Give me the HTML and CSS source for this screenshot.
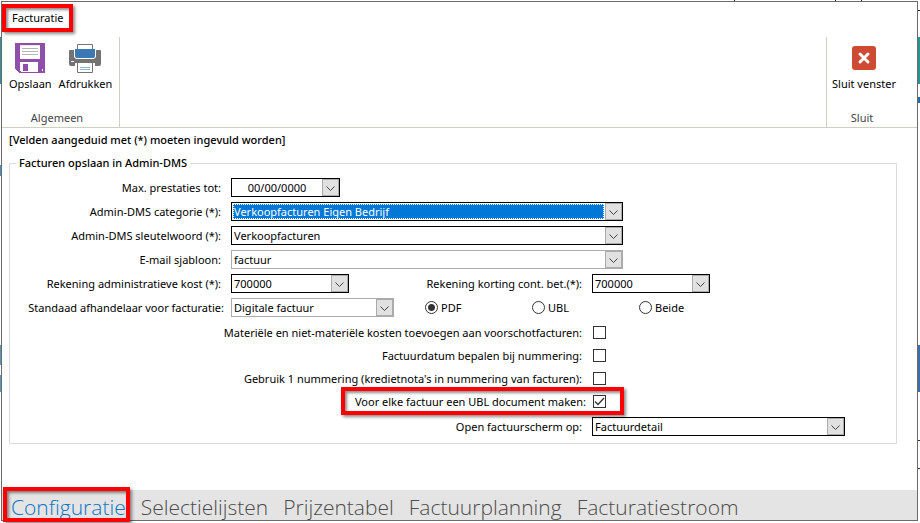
FILE: index.html
```html
<!DOCTYPE html>
<html lang="nl">
<head>
<meta charset="utf-8">
<title>Facturatie</title>
<link rel="stylesheet" href="styles.css">
</head>
<body>
<div class="window">
  <header class="titlebar"><h1 class="title marked">Facturatie</h1></header>

  <div class="ribbon">
    <section class="group">
      <div class="actions">
        <button type="button" class="action">
          <svg width="32" height="32" viewBox="0 0 32 32" aria-hidden="true" shape-rendering="crispEdges">
            <path fill="#8e4fab" d="M1 1H31V31H5L1 27Z"/>
            <path fill="#fff" d="M6 3H26V17H6Z"/>
            <path fill="#e8e8e8" d="M6 3H26V4H6Z"/>
            <path fill="#b4b4b4" d="M8 6H24V7H8ZM8 9H24V10H8ZM8 12H24V13H8Z"/>
            <path fill="#fff" d="M6 20H24V30H7L6 29Z"/>
            <path fill="#8e4fab" d="M9 22H14V29H9Z"/>
            <path fill="#fff" d="M28 27H29V29H28Z"/>
          </svg>
          <span>Opslaan</span>
        </button>
        <button type="button" class="action">
          <svg width="32" height="32" viewBox="0 0 32 32" aria-hidden="true">
            <path fill="#737373" d="M0 9Q0 8 1 8H5V15L7 17H25L27 15V8H31Q32 8 32 9V22Q32 24 30 24H26V21H6V24H2Q0 24 0 22Z"/>
            <path fill="#fff" stroke="#737373" d="M8.500 2.500H23.500V8H8.500Z"/>
            <path fill="#3c78b5" d="M6 7H26V14Q26 16 24 16H8Q6 16 6 14Z"/>
            <path fill="#fff" d="M2 19H5V20H2ZM8 21H24V31H8Z"/>
            <path fill="none" stroke="#737373" d="M8.500 21V30.500H23.500V21"/>
            <path fill="#8eb3cf" d="M11 25H21V26H11ZM11 27H21V28H11Z"/>
          </svg>
          <span>Afdrukken</span>
        </button>
      </div>
      <h2 class="caption">Algemeen</h2>
    </section>
    <section class="group group-close">
      <div class="actions">
        <button type="button" class="action">
          <svg width="32" height="32" viewBox="0 0 32 32" aria-hidden="true">
            <rect x="4" y="4" width="24" height="24" rx="3" fill="#cd4b33"/>
            <path stroke="#fff" stroke-width="3" stroke-linecap="round" d="M12 12L20 20M20 12L12 20"/>
          </svg>
          <span>Sluit venster</span>
        </button>
      </div>
      <h2 class="caption">Sluit</h2>
    </section>
  </div>

  <main class="content">
    <p class="notice">[Velden aangeduid met (*) moeten ingevuld worden]</p>
    <form>
      <fieldset class="panel">
        <legend>Facturen opslaan in Admin-DMS</legend>
        <div class="rows">
          <div class="row">
            <label for="date">Max. prestaties tot:</label>
            <span class="combo required w-date"><input id="date" type="text" value="00/00/0000"><button type="button" class="drop" aria-label="Kalender"><svg width="9" height="6" viewBox="0 0 9 6"><path d="M.5 .5L4.500 4.500L8.500 .5"/></svg></button></span>
          </div>
          <div class="row">
            <label for="category">Admin-DMS categorie (*):</label>
            <span class="combo required active w-full"><select id="category"><option>Verkoopfacturen Eigen Bedrijf</option></select><span class="drop"><svg width="9" height="6" viewBox="0 0 9 6"><path d="M.5 .5L4.500 4.500L8.500 .5"/></svg></span></span>
          </div>
          <div class="row">
            <label for="keyword">Admin-DMS sleutelwoord (*):</label>
            <span class="combo required w-full"><select id="keyword"><option>Verkoopfacturen</option></select><span class="drop"><svg width="9" height="6" viewBox="0 0 9 6"><path d="M.5 .5L4.500 4.500L8.500 .5"/></svg></span></span>
          </div>
          <div class="row">
            <label for="template">E-mail sjabloon:</label>
            <span class="combo w-full"><select id="template"><option>factuur</option></select><span class="drop"><svg width="9" height="6" viewBox="0 0 9 6"><path d="M.5 .5L4.500 4.500L8.500 .5"/></svg></span></span>
          </div>
          <div class="row pair">
            <label for="cost">Rekening administratieve kost (*):</label>
            <span class="combo required w-account"><select id="cost"><option>700000</option></select><span class="drop"><svg width="9" height="6" viewBox="0 0 9 6"><path d="M.5 .5L4.500 4.500L8.500 .5"/></svg></span></span>
            <label for="discount">Rekening korting cont. bet.(*):</label>
            <span class="combo required w-account"><select id="discount"><option>700000</option></select><span class="drop"><svg width="9" height="6" viewBox="0 0 9 6"><path d="M.5 .5L4.500 4.500L8.500 .5"/></svg></span></span>
          </div>
          <div class="row">
            <label for="handler" class="wide">Standaad afhandelaar voor facturatie:</label>
            <span class="split">
              <span class="combo w-handler"><select id="handler"><option>Digitale factuur</option></select><span class="drop"><svg width="9" height="6" viewBox="0 0 9 6"><path d="M.5 .5L4.500 4.500L8.500 .5"/></svg></span></span>
              <span class="radios">
                <label><input type="radio" name="format" checked>PDF</label>
                <label><input type="radio" name="format">UBL</label>
                <label><input type="radio" name="format">Beide</label>
              </span>
            </span>
          </div>
        </div>
        <div class="checks">
          <div class="check"><label for="c1">Materiële en niet-materiële kosten toevoegen aan voorschotfacturen:</label><input id="c1" type="checkbox"></div>
          <div class="check"><label for="c2">Factuurdatum bepalen bij nummering:</label><input id="c2" type="checkbox"></div>
          <div class="check"><label for="c3">Gebruik 1 nummering (kredietnota's in nummering van facturen):</label><input id="c3" type="checkbox"></div>
          <div class="check"><span class="marked ubl"><label for="c4">Voor elke factuur een UBL document maken:</label><input id="c4" type="checkbox" checked></span></div>
        </div>
        <div class="check open">
          <label for="screen">Open factuurscherm op:</label>
          <span class="combo required w-screen"><select id="screen"><option>Factuurdetail</option></select><span class="drop"><svg width="9" height="6" viewBox="0 0 9 6"><path d="M.5 .5L4.500 4.500L8.500 .5"/></svg></span></span>
        </div>
      </fieldset>
    </form>
  </main>

  <nav class="tabs">
    <a href="#" class="current marked" aria-current="page">Configuratie</a>
    <a href="#">Selectielijsten</a>
    <a href="#">Prijzentabel</a>
    <a href="#">Factuurplanning</a>
    <a href="#">Facturatiestroom</a>
  </nav>
</div>
</body>
</html>
```
FILE: styles.css
```css
* { box-sizing: border-box; }

body {
  margin: 0;
  min-height: 100vh;
  padding: 1px 2px 2px 1px;
  display: flex;
  font: 11px/16px "Noto Sans", "Open Sans", sans-serif;
  color: #000;
  background:
    linear-gradient(#2b9391, #2b9391) 0 37px / 100% 47px no-repeat,
    linear-gradient(#4a8fc4, #4a8fc4) 0 165px / 1px 11px no-repeat,
    linear-gradient(#5596bd, #5596bd) 0 345px / 1px 20px no-repeat,
    linear-gradient(#5596bd, #5596bd) 0 375px / 1px 17px no-repeat,
    linear-gradient(#3c6faa, #3c6faa) 100% 345px / 2px 47px no-repeat,
    linear-gradient(#1f6fb0, #1f6fb0) 100% 97px / 2px 6px no-repeat,
    linear-gradient(#222, #222) 100% 10px / 2px 1px no-repeat,
    linear-gradient(#222, #222) 734px 0 / 1px 1px no-repeat,
    linear-gradient(#222, #222) 835px 0 / 1px 1px no-repeat,
    linear-gradient(#222, #222) 861px 0 / 1px 1px no-repeat,
    linear-gradient(#2a2a55, #2a2a55) 100% 440px / 2px 1px no-repeat,
    linear-gradient(#2a2a55, #2a2a55) 100% 468px / 2px 1px no-repeat,
    #fff;
}

button, input, select { font: inherit; color: inherit; margin: 0; }

.window {
  flex: 1;
  min-width: 0;
  display: flex;
  flex-direction: column;
  border: 1px solid #6b6b6b;
  background: #fff;
}

/* red callout frame around an element */
.marked { position: relative; }
.marked::after {
  content: "";
  position: absolute;
  inset: -6px -10px -6px -10px;
  border: 4px solid #fe0000;
  box-shadow: 2px 2px 3px rgba(0, 0, 0, .45), inset 2px 2px 3px rgba(0, 0, 0, .45);
  pointer-events: none;
}

.titlebar { height: 35px; padding: 8px 10px; }
.title { display: inline-block; margin: 0; font: inherit; }

.ribbon {
  display: flex;
  justify-content: space-between;
  border-bottom: 1px solid #d1cec4;
}
.group {
  width: 118px;
  height: 90px;
  padding: 5px 6px 1px 7px;
  display: flex;
  flex-direction: column;
  border-right: 1px solid #d1cec4;
}
.group-close {
  width: 91px;
  padding: 5px 20px 1px 0;
  border-right: 0;
  border-left: 1px solid #d1cec4;
}
.actions { display: flex; gap: 7px; }
.action {
  display: flex;
  flex-direction: column;
  align-items: center;
  gap: 2px;
  padding: 0;
  border: 0;
  background: none;
  white-space: nowrap;
}
.group-close .action { padding-left: 5px; }
.caption { margin: auto 0 0; padding-right: 8px; font: inherit; text-align: center; color: #444; }
.group-close .caption { padding-right: 0; }

.content { padding: 4px 20px 0 7px; }
.notice { margin: 0; font-weight: 500; }
.panel {
  min-width: 0;
  margin: 7px 0 0;
  padding: 7px 0 5px;
  border: 1px solid #dcdcdc;
}
.panel legend { margin-left: 6px; padding: 0 3px; font-weight: 500; }

.rows { display: grid; gap: 5px; }
.row {
  display: grid;
  grid-template-columns: 211px auto;
  column-gap: 10px;
  justify-content: start;
  align-items: center;
  height: 19px;
}
.row > label { text-align: right; white-space: nowrap; }
.row > label.wide { margin-right: -3px; }
.pair { grid-template-columns: 211px 118px 223px 118px; }

.combo { display: flex; height: 19px; border: 1px solid #ababab; background: #fff; }
.combo.required { border-color: #000; }
.combo select, .combo input {
  flex: 1;
  min-width: 0;
  padding: 0 2px;
  border: 0;
  background: none;
  appearance: none;
  outline: 0;
}
.combo input { padding-right: 2px; text-align: center; }
.combo.active select { margin: 1px; padding: 0; line-height: 13px; color: #fff; background: #0078d7; border: 1px dotted #fff; }
.drop {
  width: 17px;
  padding: 3px 0 0;
  display: flex;
  align-items: center;
  justify-content: center;
  border: 1px solid #ababab;
  background: #e1e1e1;
}
.drop path { fill: none; stroke: #444; }

.w-date { width: 109px; }
.w-full { width: 392px; }
.w-account { width: 118px; }
.w-handler { width: 163px; }
.w-screen { width: 253px; }

.split { display: flex; align-items: center; gap: 31px; }
.radios { display: grid; grid-template-columns: repeat(3, 107px); }
.radios label { display: flex; align-items: center; gap: 3px; }

input[type="radio"], input[type="checkbox"] {
  appearance: none;
  flex: none;
  width: 13px;
  height: 13px;
  border: 1px solid #333;
  background: #fff;
}
input[type="radio"] { border-radius: 50%; }
input[type="radio"]:checked { background: radial-gradient(circle, #333 3px, #fff 4px); }
input[type="checkbox"]:checked {
  background: url("data:image/svg+xml,%3Csvg xmlns='http://www.w3.org/2000/svg' viewBox='0 0 11 11'%3E%3Cpath d='M1 5.500L4 8.500L10 2' fill='none' stroke='%23333' stroke-width='1.300'/%3E%3C/svg%3E");
}

.checks { display: grid; margin-top: 4px; }
.check {
  display: grid;
  grid-template-columns: 572px 13px;
  column-gap: 11px;
  justify-content: start;
  align-items: center;
  height: 23px;
}
.check > label { text-align: right; }
.ubl {
  grid-column: 1 / -1;
  justify-self: end;
  display: flex;
  align-items: center;
  gap: 7px;
}
.ubl::after { inset: -7px -18px -5px -14px; }
.open { grid-template-columns: 572px auto; column-gap: 10px; margin-top: 2px; }

.tabs {
  height: 30px;
  margin-top: auto;
  padding: 0 9px;
  display: flex;
  gap: 15px;
  background: #e4e4e4;
  font: 300 21px/34px "Open Sans", sans-serif;
  white-space: nowrap;
}
.tabs a { color: #4c4c4c; text-decoration: none; }
.tabs .current { color: #0b74c9; }
.tabs .current::after { inset: -3px -4px -2px -8px; }
```
